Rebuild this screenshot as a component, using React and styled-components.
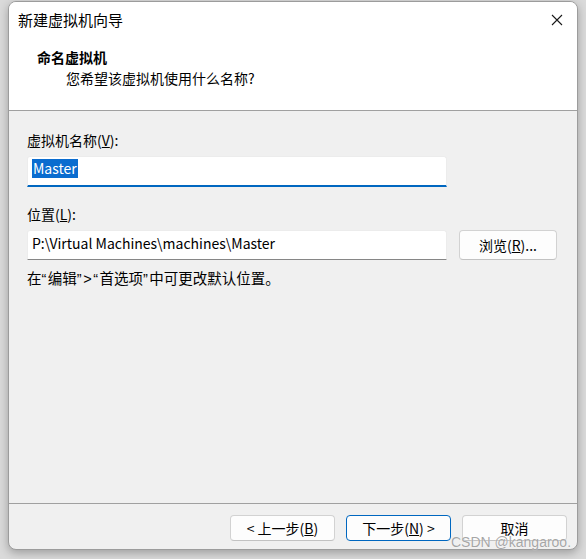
import React from "react";
import styled, { createGlobalStyle } from "styled-components";

const Global = createGlobalStyle`
  html, body { margin: 0; padding: 0; }
  body {
    background: #dadada;
    font-family: "Microsoft YaHei UI", "Noto Sans CJK SC", "Noto Sans", sans-serif;
    color: #000;
  }
`;

const Page = styled.div`
  width: 586px;
  height: 559px;
  padding: 1px 0 0 8px;
  box-sizing: border-box;
  position: relative;
  overflow: hidden;
`;

const Window = styled.div`
  width: 570px;
  height: 549px;
  box-sizing: border-box;
  border: 1px solid #9c9c9c;
  border-radius: 8px;
  overflow: hidden;
  background: #f0f0f0;
  display: flex;
  flex-direction: column;
  box-shadow: 0 3px 10px rgba(0, 0, 0, 0.28);
`;

const Header = styled.div`
  height: 108px;
  flex: none;
  background: #fff;
  border-bottom: 1px solid #a0a0a0;
  display: flex;
  flex-direction: column;
`;

const TitleRow = styled.div`
  height: 36px;
  display: flex;
  align-items: center;
  justify-content: space-between;
  padding: 0 14px 0 9px;
`;

const Title = styled.div`
  font-size: 15px;
  line-height: 20px;
`;

const Close = styled.svg`
  width: 12px;
  height: 12px;
`;

const Heading = styled.div`
  margin: 9px 0 0 28px;
  font-size: 14px;
  line-height: 20px;
  font-weight: 700;
`;

const Sub = styled.div`
  margin: 1px 0 0 57px;
  font-size: 14px;
  line-height: 20px;
`;

const Body = styled.div`
  flex: 1;
  padding: 19px 20px 0 18px;
  display: flex;
  flex-direction: column;
`;

const Label = styled.div`
  font-size: 14px;
  line-height: 20px;
  margin-top: ${(p) => p.$mt || 0}px;
`;

const Field = styled.div`
  width: 420px;
  height: ${(p) => (p.$focus ? 31 : 30)}px;
  box-sizing: border-box;
  background: #fff;
  border: 1px solid #ececec;
  border-bottom: ${(p) => (p.$focus ? "2px solid #0067c0" : "1px solid #868686")};
  border-radius: 3px 3px 0 0;
  padding: ${(p) => (p.$focus ? "1px 0 0 4px" : "2px 0 0 4px")};
  font-size: 14px;
  line-height: 21px;
  display: flex;
  align-items: flex-start;
  white-space: nowrap;
`;

const Selected = styled.span`
  background: #0a6ccf;
  color: #fff;
  padding: 0 1px;
  line-height: 19px;
  margin-top: 1px;
`;

const Row = styled.div`
  display: flex;
  align-items: flex-start;
  gap: 12px;
  margin-top: ${(p) => p.$mt || 0}px;
`;

const Button = styled.button`
  font-family: inherit;
  font-size: 14px;
  line-height: 20px;
  width: ${(p) => p.$w || 105}px;
  height: ${(p) => p.$h || 26}px;
  box-sizing: border-box;
  padding: 0;
  background: #fdfdfd;
  border: 1px solid ${(p) => (p.$primary ? "#0067c0" : "#d2d2d2")};
  border-bottom-color: ${(p) => (p.$primary ? "#0067c0" : "#c2c2c2")};
  border-radius: 4px;
  color: #000;
  display: flex;
  align-items: center;
  justify-content: center;
`;

const Hint = styled.div`
  font-size: 14.5px;
  line-height: 20px;
  margin-top: 8px;
`;

const Narrow = styled.span`
  font-family: "Liberation Sans", "Noto Sans", sans-serif;
  letter-spacing: 1.5px;
`;

const Footer = styled.div`
  height: 46px;
  flex: none;
  border-top: 1px solid #a0a0a0;
  display: flex;
  justify-content: flex-end;
  align-items: flex-start;
  gap: 11px;
  padding: 11px 10px 0 0;
  box-sizing: border-box;
`;

const Watermark = styled.div`
  position: absolute;
  left: 451px;
  top: 535px;
  font-family: "Liberation Sans", Arial, sans-serif;
  font-size: 14px;
  line-height: 14px;
  color: rgba(150, 150, 150, 0.85);
  text-shadow: 0 0 1px rgba(255, 255, 255, 0.9);
  pointer-events: none;
`;

export default function App() {
  return (
    <>
      <Global />
      <Page>
        <Window>
          <Header>
            <TitleRow>
              <Title>新建虚拟机向导</Title>
              <Close viewBox="0 0 12 12">
                <path d="M1 1L11 11M11 1L1 11" stroke="#1a1a1a" strokeWidth="1.1" fill="none" />
              </Close>
            </TitleRow>
            <Heading>命名虚拟机</Heading>
            <Sub>您希望该虚拟机使用什么名称?</Sub>
          </Header>
          <Body>
            <Label>
              虚拟机名称(<u>V</u>):
            </Label>
            <Row $mt={6}>
              <Field $focus>
                <Selected>Master</Selected>
              </Field>
            </Row>
            <Label $mt={17}>
              位置(<u>L</u>):
            </Label>
            <Row $mt={6}>
              <Field>P:\Virtual Machines\machines\Master</Field>
              <Button $w={98} $h={30}>
                浏览(<u>R</u>)...
              </Button>
            </Row>
            <Hint>
              在<Narrow>“</Narrow>编辑<Narrow>”&gt;“</Narrow>首选项<Narrow>”</Narrow>中可更改默认位置。
            </Hint>
          </Body>
          <Footer>
            <Button>
              &lt; 上一步(<u>B</u>)
            </Button>
            <Button $primary>
              下一步(<u>N</u>) &gt;
            </Button>
            <Button>取消</Button>
          </Footer>
        </Window>
        <Watermark>CSDN @kangaroo.</Watermark>
      </Page>
    </>
  );
}
